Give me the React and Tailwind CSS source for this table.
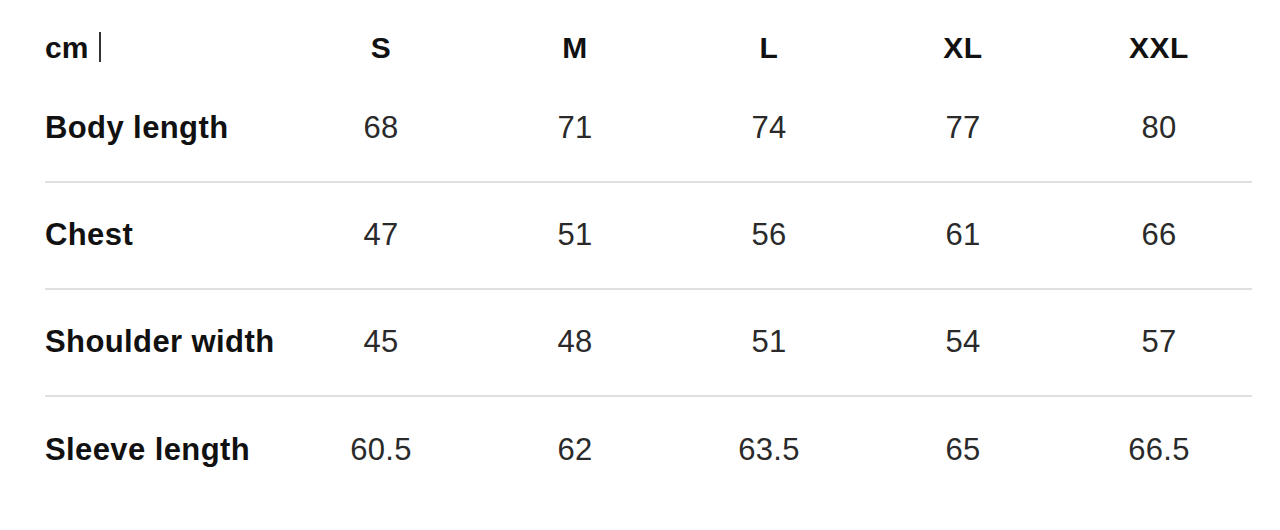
const SIZES = ['S', 'M', 'L', 'XL', 'XXL'];

const ROWS = [
  { label: 'Body length', values: ['68', '71', '74', '77', '80'] },
  { label: 'Chest', values: ['47', '51', '56', '61', '66'] },
  { label: 'Shoulder width', values: ['45', '48', '51', '54', '57'] },
  { label: 'Sleeve length', values: ['60.5', '62', '63.5', '65', '66.5'] },
];

export default function App() {
  return (
    <div className="min-h-[530px] bg-white pl-[45px] pr-[28px] pt-[18px] font-['Liberation_Sans',Arial,sans-serif]">
      {/* Header */}
      <div className="grid grid-cols-[239px_194px_194px_194px_194px_198px] h-[58px] items-center">
        <div className="flex items-center gap-[11px]">
          <span className="text-[30px] font-bold text-[#111]">cm</span>
          <span className="w-[2px] h-[30px] bg-[#333]" />
        </div>
        {SIZES.map((size) => (
          <div key={size} className="text-center text-[30px] font-bold text-[#111] tracking-[0.5px]">
            {size}
          </div>
        ))}
      </div>

      {/* Rows */}
      {ROWS.map((row, i) => (
        <div
          key={row.label}
          className={`grid grid-cols-[239px_194px_194px_194px_194px_198px] h-[107px] items-center ${
            i < ROWS.length - 1 ? 'border-b-2 border-[#e0e0e0]' : ''
          }`}
        >
          <div className="text-[31px] font-bold text-[#111] tracking-[0.4px]">{row.label}</div>
          {row.values.map((v, j) => (
            <div key={j} className="text-center text-[31px] text-[#2a2a2a] tracking-[0.3px]">
              {v}
            </div>
          ))}
        </div>
      ))}
    </div>
  );
}
